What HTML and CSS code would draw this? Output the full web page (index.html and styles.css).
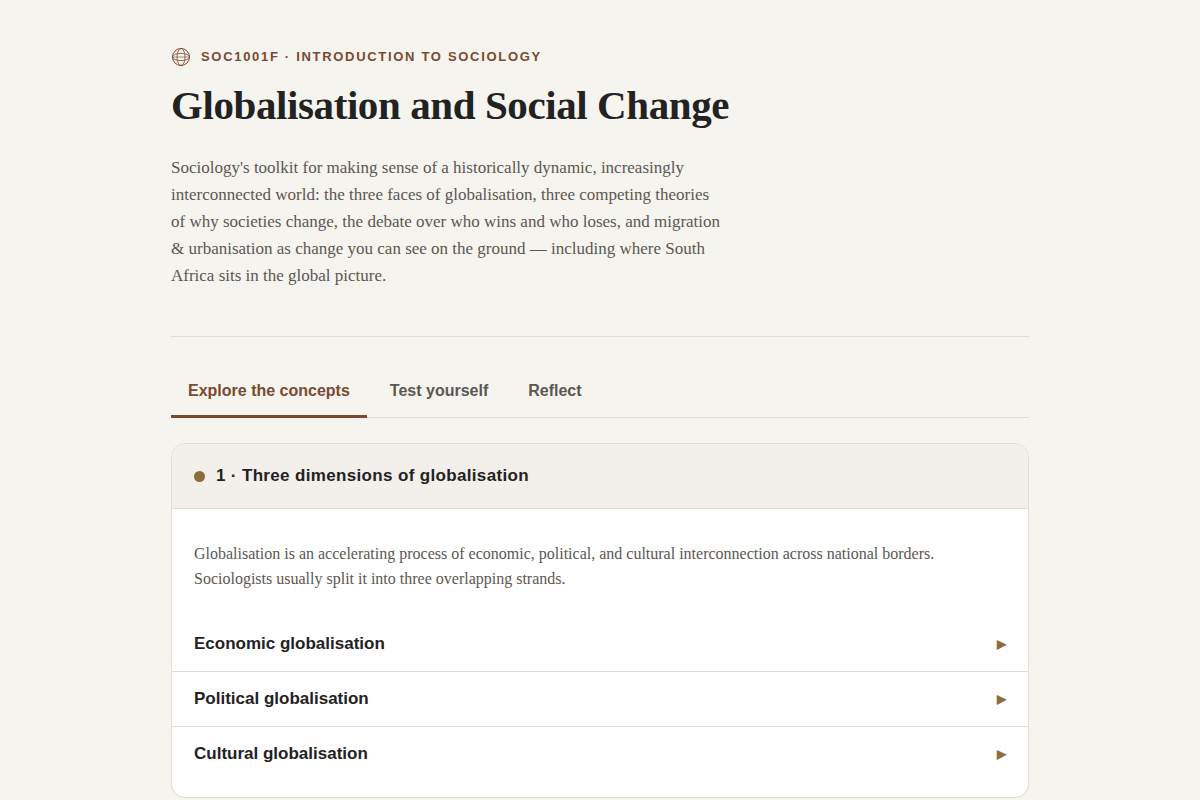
FILE: index.html
```html
<!DOCTYPE html>
<html lang="en">
<head>
<meta charset="utf-8">
<meta name="viewport" content="width=device-width, initial-scale=1">
<title>Globalisation and Social Change</title>
<link rel="stylesheet" href="styles.css">
</head>
<body>
<div class="wrap">
  <header class="intro">
    <div class="eyebrow">
      <svg class="globe" viewBox="0 0 20 20" fill="none" stroke="currentColor" aria-hidden="true">
        <circle cx="10" cy="10" r="8.5"/>
        <ellipse cx="10" cy="10" rx="4" ry="8.5" stroke-width="0.8"/>
        <ellipse cx="10" cy="10" rx="8.5" ry="3.6" stroke-width="0.8"/>
        <path d="M1.5 10h17" stroke-width="0.6"/>
      </svg>
      <span>SOC1001F · Introduction to Sociology</span>
    </div>
    <h1>Globalisation and Social Change</h1>
    <p class="lede">Sociology's toolkit for making sense of a historically dynamic, increasingly interconnected world: the three faces of globalisation, three competing theories of why societies change, the debate over who wins and who loses, and migration &amp; urbanisation as change you can see on the ground — including where South Africa sits in the global picture.</p>
  </header>
  <nav class="tabs" role="tablist">
    <button class="tab active" role="tab" aria-selected="true">Explore the concepts</button>
    <button class="tab" role="tab" aria-selected="false">Test yourself</button>
    <button class="tab" role="tab" aria-selected="false">Reflect</button>
  </nav>
  <section class="card">
    <div class="card-head"><span class="dot"></span><h2>1 · Three dimensions of globalisation</h2></div>
    <div class="card-body">
      <p class="card-intro">Globalisation is an accelerating process of economic, political, and cultural interconnection across national borders. Sociologists usually split it into three overlapping strands.</p>
      <button class="row" aria-expanded="false"><span>Economic globalisation</span><span class="arrow">▶</span></button>
      <button class="row" aria-expanded="false"><span>Political globalisation</span><span class="arrow">▶</span></button>
      <button class="row" aria-expanded="false"><span>Cultural globalisation</span><span class="arrow">▶</span></button>
    </div>
  </section>
</div>
</body>
</html>
```
FILE: styles.css
```css
* { box-sizing: border-box; }
body {
  margin: 0;
  background: #f6f4ef;
  color: #222;
  font-family: "Liberation Serif", serif;
}
.wrap { max-width: 906px; margin: 0 auto; padding: 46px 24px 0; }
.intro { padding-bottom: 47px; border-bottom: 1px solid #dfdcd0; }
.eyebrow {
  display: flex;
  align-items: center;
  gap: 10px;
  height: 22px;
  color: #7a4a2e;
  font: bold 13px/22px "Liberation Sans", sans-serif;
  letter-spacing: 0.13em;
  text-transform: uppercase;
}
.globe { width: 20px; height: 20px; }
h1 { margin: 14px 0 26px; font-size: 41px; line-height: 46px; letter-spacing: -0.01em; }
.lede { max-width: 554px; margin: 0; color: #5c5751; font-size: 17px; line-height: 27px; }
.tabs { display: flex; gap: 6px; margin-top: 26px; border-bottom: 1px solid #dfdcd0; }
.tab {
  margin: 0 0 -1px;
  padding: 19px 17px 15px;
  border: 0;
  border-bottom: 3px solid transparent;
  background: none;
  color: #5c5751;
  font: bold 16px/18px "Liberation Sans", sans-serif;
}
.tab.active { color: #7a4a2e; border-color: #7a4a2e; }
.card {
  margin: 25px 0 40px;
  overflow: hidden;
  border: 1px solid #dfdcd0;
  border-radius: 14px;
  background: #fff;
}
.card-head {
  display: flex;
  align-items: center;
  gap: 11px;
  padding: 20px 22px;
  border-bottom: 1px solid #dfdcd0;
  background: #f3efea;
}
.dot { width: 11px; height: 11px; border-radius: 50%; background: #8c6d3b; }
h2 { margin: 0; font: bold 17px/24px "Liberation Sans", sans-serif; letter-spacing: 0.02em; }
.card-body { padding: 32px 0 16px; }
.card-intro { margin: 0 22px 26px; color: #5c5751; font-size: 16px; line-height: 25px; }
.row {
  display: flex;
  justify-content: space-between;
  align-items: center;
  width: 100%;
  padding: 17px 22px;
  border: 0;
  border-bottom: 1px solid #dfdcd0;
  background: none;
  color: #222;
  font: bold 17px/20px "Liberation Sans", sans-serif;
  text-align: left;
}
.row:last-child { border-bottom: 0; }
.arrow { color: #8c6d3b; font-size: 12px; }
```
